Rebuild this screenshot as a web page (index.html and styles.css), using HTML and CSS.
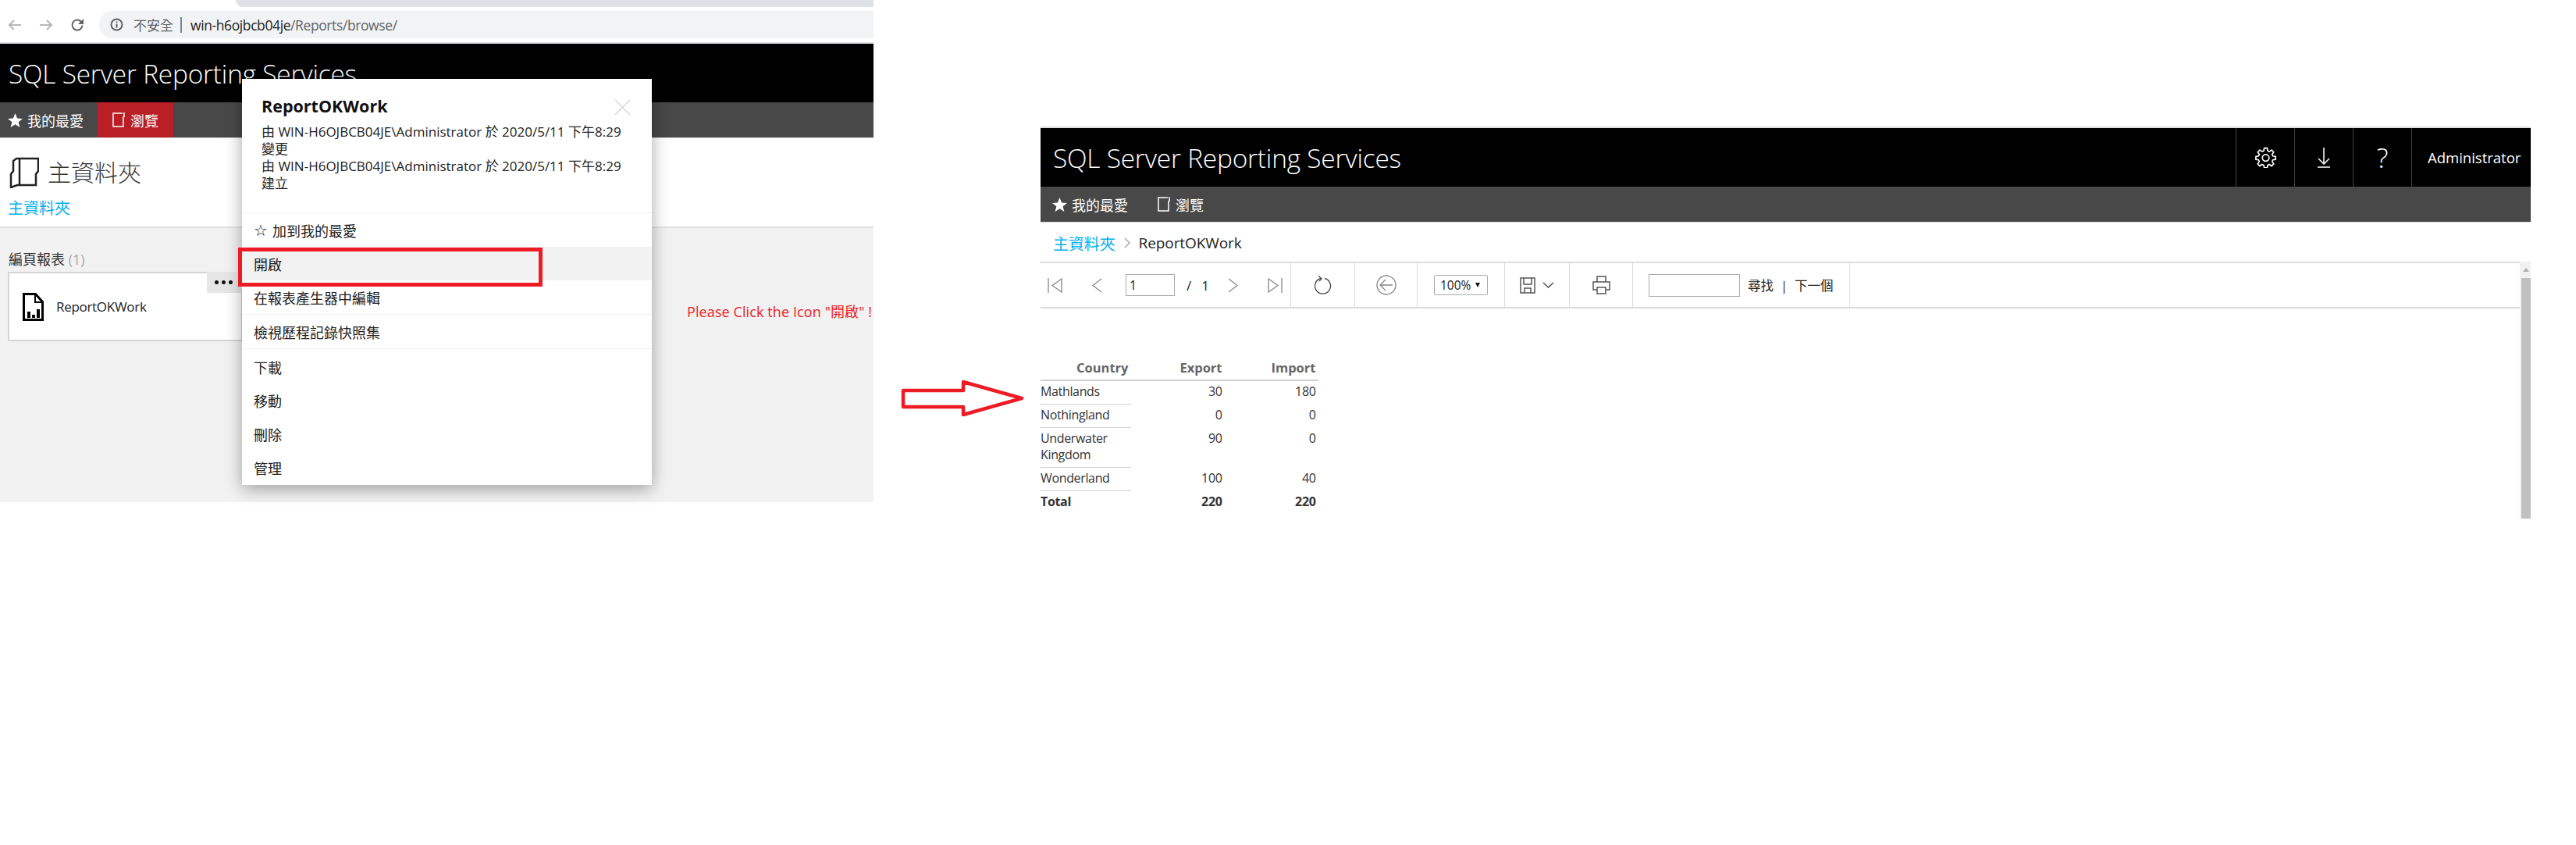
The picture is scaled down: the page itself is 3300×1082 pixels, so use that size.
FILE: index.html
```html
<!DOCTYPE html>
<html lang="zh-Hant">
<head>
<meta charset="utf-8">
<title>SQL Server Reporting Services</title>
<link rel="stylesheet" href="styles.css">
</head>
<body>
<div class="canvas">
  <section class="left">
    <div class="tabstrip"><div class="tab-gap"></div></div>
    <div class="addr-row">
      <svg class="nav-ic" width="18" height="16" viewBox="0 0 18 16"><path d="M17 8H2M8 2 2 8l6 6" class="chrome-off"/></svg>
      <svg class="nav-ic fwd" width="18" height="16" viewBox="0 0 18 16"><path d="M1 8h15M10 2l6 6-6 6" class="chrome-off"/></svg>
      <svg class="nav-ic fwd" width="18" height="18" viewBox="0 0 18 18"><path d="M15.5 9.5A6.5 6.5 0 1 1 13.5 4.3L16 6.5" class="chrome-on"/><path d="M17 1v7h-7z" class="chrome-fill"/></svg>
      <div class="omnibox">
        <svg width="17" height="17" viewBox="0 0 17 17"><circle cx="8.5" cy="8.5" r="7" class="chrome-on"/><path d="M8.5 7.5v5M8.5 4.5v1.6" class="chrome-on"/></svg>
        <span class="insecure">不安全</span><span class="pipe"></span>
        <span class="url"><span class="host">win-h6ojbcb04je</span>/Reports/browse/</span>
      </div>
    </div>
    <header class="head">
      <div class="brand">SQL Server Reporting Services</div>
    </header>
    <nav class="nav">
      <div class="nav-item fav">
        <svg width="19" height="18" viewBox="0 0 19 18"><path d="M9.5 0l2.6 6.500 6.900.4-5.400 4.400 1.800 6.700-5.900-3.800-5.900 3.800 1.800-6.700L0 6.900l6.900-.4z" class="white-fill"/></svg>
        <span>我的最愛</span>
      </div>
      <div class="nav-item active">
        <svg width="16" height="19" viewBox="0 0 16 19"><path d="M13 1H1v17h13V5" class="white-line"/><path d="M15 0v6" class="white-line"/></svg>
        <span>瀏覽</span>
      </div>
    </nav>
    <div class="page-head">
      <div class="page-title">
        <svg width="38" height="40" viewBox="0 0 38 40"><path d="M9 2h28v16l-3 4v14H10l-8 3V22l3-4V5z M13 2v33" class="dark-line"/></svg>
        <h1>主資料夾</h1>
      </div>
      <a class="link crumb-left">主資料夾</a>
    </div>
    <div class="browse">
      <h2>編頁報表 <span class="count">(1)</span></h2>
      <div class="card">
        <svg width="27" height="36" viewBox="0 0 27 36"><path d="M1.500 1.500h15l9 10v23h-24z" class="doc"/><path d="M16 2v10h9" class="doc-fold"/><path d="M6 24h4v8H6zM12 28h4v4h-4zM18 21h4v11h-4z"/></svg>
        <span class="card-name">ReportOKWork</span>
        <div class="more"><i></i><i></i><i></i></div>
        <div class="pointer"></div>
      </div>
      <p class="hint">Please Click the Icon "開啟" !</p>
    </div>
    <div class="popup">
      <div class="pop-head">
        <h3>ReportOKWork</h3>
        <svg class="close" width="21" height="21" viewBox="0 0 21 21"><path d="M1 1l19 19M20 1 1 20"/></svg>
        <p>由 WIN-H6OJBCB04JE\Administrator 於 2020/5/11 下午8:29<br>變更<br>由 WIN-H6OJBCB04JE\Administrator 於 2020/5/11 下午8:29<br>建立</p>
      </div>
      <ul class="menu">
        <li class="fav-row"><span class="hollow">☆</span> 加到我的最愛</li>
        <li class="hover">開啟</li>
        <li class="sep">在報表產生器中編輯</li>
        <li class="sep">檢視歷程記錄快照集</li>
        <li class="first-plain">下載</li>
        <li>移動</li>
        <li>刪除</li>
        <li>管理</li>
      </ul>
    </div>
    <div class="callout"></div>
  </section>

  <div class="arrow-col">
    <svg width="160" height="48" viewBox="0 0 160 48"><path d="M3 14h77V3l75 21-75 21V35H3z" class="red-arrow"/></svg>
  </div>

  <section class="right">
    <header class="head">
      <div class="brand">SQL Server Reporting Services</div>
      <div class="head-tools">
        <div class="tool">
          <svg width="27" height="27" viewBox="0 0 24 24"><path d="M10.300 1.500h3.400l.5 3 2 .9 2.500-1.800 2.400 2.400-1.800 2.500.9 2 3 .5v3.400l-3 .5-.9 2 1.800 2.500-2.400 2.400-2.500-1.800-2 .9-.5 3h-3.400l-.5-3-2-.9-2.500 1.800-2.400-2.400 1.800-2.500-.9-2-3-.5v-3.400l3-.5.9-2-1.800-2.500 2.400-2.400 2.500 1.800 2-.9z" class="white-line"/><circle cx="12" cy="12.500" r="3.800" class="white-line"/></svg>
        </div>
        <div class="tool">
          <svg width="18" height="26" viewBox="0 0 18 26"><path d="M9 0v21M2 14l7 7 7-7M1 25h16" class="white-line"/></svg>
        </div>
        <div class="tool question">?</div>
        <div class="tool user">Administrator</div>
      </div>
    </header>
    <nav class="nav nav-plain">
      <div class="nav-item fav">
        <svg width="19" height="18" viewBox="0 0 19 18"><path d="M9.500 0l2.600 6.500 6.900.4-5.400 4.400 1.800 6.700-5.900-3.800-5.900 3.800 1.800-6.700L0 6.900l6.900-.4z" class="white-fill"/></svg>
        <span>我的最愛</span>
      </div>
      <div class="nav-item browse-plain">
        <svg width="16" height="19" viewBox="0 0 16 19"><path d="M13 1H1v17h13V5" class="white-line"/><path d="M15 0v6" class="white-line"/></svg>
        <span>瀏覽</span>
      </div>
    </nav>
    <div class="crumbs">
      <a class="link">主資料夾</a>
      <svg width="8" height="14" viewBox="0 0 8 14"><path d="M1 1l6 6-6 6" class="grey-line"/></svg>
      <span>ReportOKWork</span>
    </div>
    <div class="viewer">
      <div class="viewer-main">
        <div class="toolbar">
          <div class="tb tb-pager">
            <svg width="19" height="19" viewBox="0 0 19 19"><path d="M1 0v19M18 1 6 9.500 18 18z" class="tb-line"/></svg>
            <svg class="g37" width="14" height="19" viewBox="0 0 14 19"><path d="M13 1 2 9.500 13 18" class="tb-line"/></svg>
            <input class="page-input g30" value="1" aria-label="page">
            <span class="of g15">/<b>1</b></span>
            <svg class="g29" width="14" height="19" viewBox="0 0 14 19"><path d="M1 1l11 8.500L1 18" class="tb-line"/></svg>
            <svg class="g37" width="19" height="19" viewBox="0 0 19 19"><path d="M18 0v19M1 1l12 8.500L1 18z" class="tb-line"/></svg>
          </div>
          <div class="tb tb-82">
            <svg width="22" height="25" viewBox="0 0 22 25"><path d="M13 3.500a10 10 0 1 1-5 0" class="dark-thin"/><path d="M5 0l4 4-3 3" class="dark-thin"/></svg>
          </div>
          <div class="tb tb-80">
            <svg width="26" height="26" viewBox="0 0 26 26"><circle cx="13" cy="13" r="12" class="tb-line"/><path d="M21 13H5M12 6l-7 7 7 7" class="tb-line"/></svg>
          </div>
          <div class="tb tb-112">
            <div class="zoom-select">100%<span class="caret"></span></div>
          </div>
          <div class="tb tb-83">
            <svg width="20" height="21" viewBox="0 0 20 21"><path d="M1 1h18v19H1zM5 1v8h10V1M6 20v-6h8v6" class="tb-dark"/></svg>
            <svg width="15" height="8" viewBox="0 0 15 8"><path d="M1 1l6.500 6L14 1" class="dark-thin"/></svg>
          </div>
          <div class="tb tb-81">
            <svg width="23" height="24" viewBox="0 0 23 24"><path d="M6 8V1h11v7M6 18H1V8h21v10h-5M6 15h11v8H6z" class="tb-dark"/></svg>
          </div>
          <div class="tb tb-find">
            <input class="find-input" aria-label="find">
            <span>尋找</span><span class="bar">|</span><span>下一個</span>
          </div>
        </div>
        <div class="report">
          <table>
            <thead>
              <tr><th>Country</th><th>Export</th><th>Import</th></tr>
            </thead>
            <tbody>
              <tr><td class="c">Mathlands</td><td>30</td><td>180</td></tr>
              <tr><td class="c">Nothingland</td><td>0</td><td>0</td></tr>
              <tr><td class="c">Underwater Kingdom</td><td>90</td><td>0</td></tr>
              <tr><td class="c">Wonderland</td><td>100</td><td>40</td></tr>
              <tr class="total"><td class="n">Total</td><td>220</td><td>220</td></tr>
            </tbody>
          </table>
        </div>
      </div>
      <div class="scrollbar">
        <div class="up"></div>
        <div class="thumb"></div>
      </div>
    </div>
  </section>
</div>
</body>
</html>
```

FILE: styles.css
```css
* { box-sizing: border-box; }
html, body { margin: 0; padding: 0; background: #fff; }
body {
  font-family: "Open Sans", "Noto Sans CJK TC", sans-serif;
  font-size: 18px;
  color: #222;
}
svg { display: block; flex: none; }
h1, h2, h3, p, ul { margin: 0; padding: 0; font-weight: normal; }

.canvas { display: flex; width: 3300px; height: 1082px; overflow: hidden; align-items: flex-start; }
.left { position: relative; width: 1119px; height: 643px; flex: none; }
.arrow-col { width: 214px; flex: none; padding: 486px 0 0 35px; }
.right { width: 1909px; flex: none; margin-top: 162px; border-top: 2px solid #dedee4; }

/* browser chrome */
.tabstrip { height: 9px; padding-left: 302px; }
.tab-gap { height: 9px; background: #dee1e6; border-bottom-left-radius: 9px; }
.addr-row { display: flex; align-items: center; height: 45px; padding: 5px 0 5px 10px; }
.fwd { margin-left: 22px; }
.nav-ic { flex: none; }
.omnibox { display: flex; align-items: center; margin-left: 19px; flex: 1; height: 35px; background: #f1f3f4; border-radius: 17px 0 0 17px; padding-left: 14px; font-size: 17px; color: #5f6368; }
.insecure { margin-left: 13px; }
.pipe { width: 2px; height: 20px; background: #80868b; margin: 0 11px 0 9px; }
.url { font-size: 17.500px; letter-spacing: -.4px; }
.host { color: #222; }
.chrome-off { fill: none; stroke: #b4b7ba; stroke-width: 2; }
.chrome-on { fill: none; stroke: #5f6368; stroke-width: 2; }
.chrome-fill { fill: #5f6368; }

/* header */
.head { display: flex; height: 75px; background: #000; color: #fff; }
.left .head { border-top: 2px solid #dedee4; height: 77px; }
.brand { font-weight: 300; font-size: 33.400px; line-height: 77px; padding-left: 16px; letter-spacing: -.2px; white-space: nowrap; }
.left .brand { padding-left: 11px; }
.head-tools { display: flex; margin-left: auto; }
.tool { width: 75px; height: 75px; border-left: 1px solid #444; display: flex; align-items: center; justify-content: center; }
.question { font-weight: 300; font-size: 35px; }
.user { width: 153px; justify-content: flex-start; padding-left: 20px; font-size: 18.500px; white-space: nowrap; }

.nav { display: flex; height: 46px; background: #484848; color: #fff; border-bottom: 1px solid #ddd; font-size: 18px; }
.nav-item { display: flex; align-items: center; height: 45px; gap: 6px; }
.left .fav { width: 125px; padding-left: 10px; }
.active { width: 97px; padding-left: 19px; background: #b91f24; gap: 7px; }
.nav-plain .fav { margin-left: 15px; }
.browse-plain { margin-left: 38px; gap: 7px; }
.white-fill { fill: #fff; }
.white-line { fill: none; stroke: #fff; stroke-width: 1.500; }

/* left body */
.page-head { height: 115px; background: #fff; border-bottom: 2px solid #e2e2e2; padding: 24px 0 0 12px; }
.page-title { display: flex; align-items: center; gap: 11px; }
.page-title h1 { font-size: 30px; font-weight: 300; color: #333; line-height: 40px; }
.dark-line { fill: none; stroke: #222; stroke-width: 2.500; }
.link { color: #00b0f0; font-size: 20px; }
.crumb-left { display: block; margin: 12px 0 0 -2px; line-height: 28px; }
.browse { position: relative; height: 351px; background: #f2f2f2; padding: 26px 0 0 11px; }
.browse h2 { font-size: 18px; line-height: 28px; color: #333; }
.count { color: #aaa; }
.card { position: relative; display: flex; align-items: center; gap: 16px; width: 300px; height: 89px; margin: 2px 0 0 -1px; padding-left: 17px; background: #fff; border: 1px solid #d4d4d4; border-width: 2px 1px 2px 2px; }
.card-name { font-size: 17px; letter-spacing: -.3px; color: #222; }
.doc { fill: #fff; stroke: #000; stroke-width: 3; }
.doc-fold { fill: none; stroke: #000; stroke-width: 2; }
.more { position: absolute; top: -2px; right: -1px; display: flex; align-items: center; justify-content: center; gap: 4px; width: 45px; height: 27px; padding-right: 3px; background: #e6e6e6; }
.more i { width: 5px; height: 5px; border-radius: 50%; background: #111; }
.pointer { position: absolute; top: 7px; right: -1px; border: 6px solid transparent; border-right: 6px solid #fff; border-left: 0; }
.hint { position: absolute; left: 880px; top: 93px; font-size: 18px; letter-spacing: .1px; line-height: 28px; color: #ed1c24; white-space: nowrap; }

/* popup */
.popup { position: absolute; left: 310px; top: 101px; width: 525px; height: 520px; background: #fff; box-shadow: 0 5px 20px rgba(0,0,0,.35); }
.pop-head { position: relative; height: 172px; padding: 21px 25px 0; border-bottom: 1px solid #f0f0f0; }
.pop-head h3 { font-size: 21.500px; font-weight: 700; line-height: 28px; color: #111; }
.pop-head p { margin-top: 8px; font-size: 17px; line-height: 22px; color: #222; white-space: nowrap; }
.close { position: absolute; top: 26px; right: 27px; fill: none; stroke: #d8d8d8; stroke-width: 1.500; }
.menu { list-style: none; }
.menu li { display: flex; align-items: center; height: 43px; padding-left: 15px; font-size: 18px; color: #222; }
.fav-row { gap: 6px; }
.hollow { font-family: "DejaVu Sans", sans-serif; font-size: 20px; color: #111; }
.menu .hover { background: #f2f2f2; }
.menu .sep { height: 44px; border-bottom: 1px solid #f0f0f0; }
.menu .first-plain { margin-top: 1px; }
.callout { position: absolute; left: 305px; top: 317px; width: 390px; height: 50px; border: 5px solid #ed1c24; }

.red-arrow { fill: #fff; stroke: #ed1c24; stroke-width: 4.500; stroke-linejoin: round; }

/* right */
.crumbs { display: flex; align-items: center; gap: 11px; height: 50px; padding: 2px 0 0 16px; font-size: 19px; letter-spacing: -.1px; color: #222; }
.grey-line { fill: none; stroke: #999; stroke-width: 1.200; }
.viewer { display: flex; height: 329px; }
.viewer-main { width: 1895px; flex: none; }
.toolbar { display: flex; height: 60px; border-top: 2px solid #dcdcdc; border-bottom: 2px solid #dcdcdc; }
.tb { display: flex; align-items: center; justify-content: center; height: 56px; border-right: 1px solid #dcdcdc; flex: none; }
.tb-pager { width: 321px; justify-content: flex-start; padding-left: 9px; }
.g37 { margin-left: 37px; }
.g30 { margin-left: 30px; }
.g29 { margin-left: 29px; }
.g15 { margin-left: 15px; }
.page-input { width: 63px; height: 28px; border: 1px solid #aaa; padding: 0 4px; font: 16px "Open Sans", sans-serif; color: #222; background: #fff; }
.of { display: flex; gap: 13px; font-size: 17px; width: 24px; color: #222; }
.of b { font-weight: 400; }
.tb-82 { width: 82px; }
.tb-80 { width: 80px; }
.tb-112 { width: 112px; }
.tb-83 { width: 83px; gap: 9px; }
.tb-81 { width: 81px; }
.tb-find { width: 278px; justify-content: flex-start; padding-left: 20px; font-size: 16.500px; color: #222; }
.tb-find .bar { margin: 0 9px; }
.find-input { width: 117px; height: 29px; border: 1px solid #aaa; margin-right: 10px; background: #fff; }
.tb-line { fill: none; stroke: #888; stroke-width: 1.300; }
.tb-dark { fill: none; stroke: #555; stroke-width: 1.500; }
.dark-thin { fill: none; stroke: #444; stroke-width: 1.300; }
.zoom-select { display: flex; align-items: center; gap: 6px; width: 69px; height: 26px; padding-left: 7px; border: 1px solid #aaa; border-radius: 2px; font-size: 15.500px; color: #222; }
.caret { border: 3.500px solid transparent; border-top: 6px solid #111; border-bottom: 0; }

.report { padding-top: 63px; }
table { border-collapse: collapse; width: 356px; table-layout: fixed; font-size: 16px; letter-spacing: -.35px; line-height: 21px; color: #333; }
th { height: 29px; padding: 0 3.500px 4px 0; text-align: right; font-weight: 700; font-size: 16.500px; letter-spacing: 0; color: #666; border-bottom: 2px solid #d0d0d0; }
td { padding: 3px 3.500px 5px 0; text-align: right; vertical-align: top; }
td.c, td.n { text-align: left; }
td.c { border-bottom: 1px solid #d0d0d0; }
th:first-child { width: 116px; }
.total td { font-weight: 700; }

.scrollbar { width: 14px; flex: none; background: #f1f1f1; padding-left: 2px; }
.up { height: 21px; position: relative; }
.up::after { content: ""; position: absolute; left: 2px; top: 8px; border: 4px solid transparent; border-bottom: 5px solid #b0b0b0; border-top: 0; }
.thumb { height: 308px; background: #c0c0c0; }
```
